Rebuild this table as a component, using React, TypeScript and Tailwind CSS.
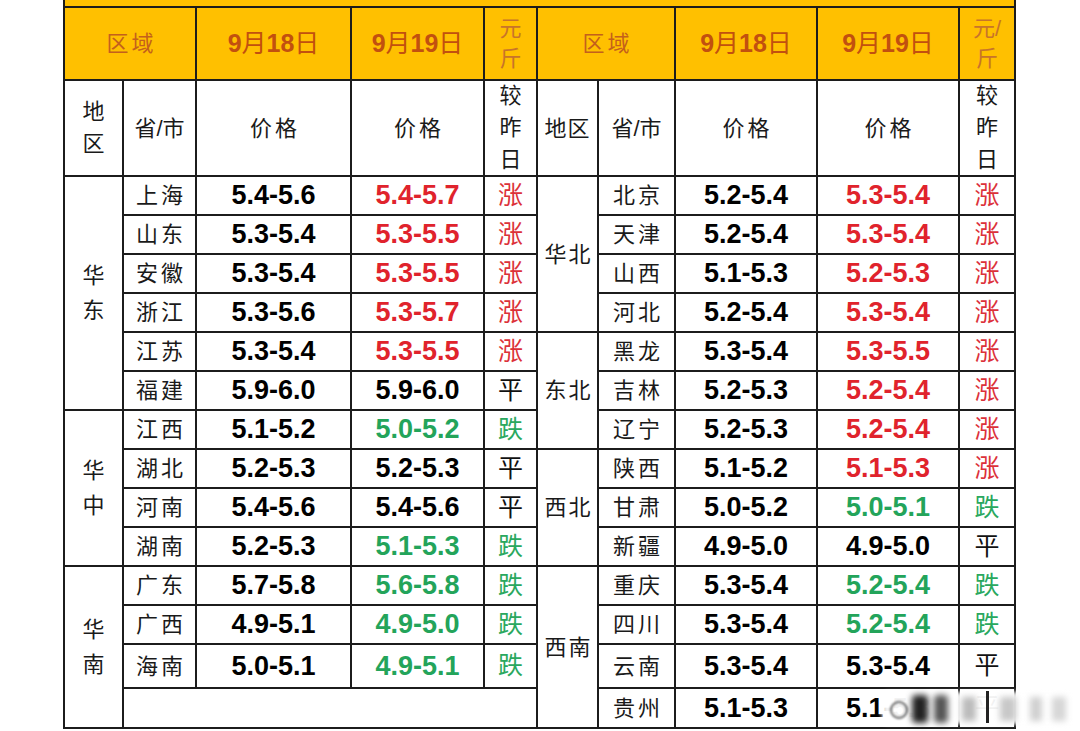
import React from 'react';

type Chg = '涨' | '跌' | '平';
type Row = { name: string; a: string; b: string; c: Chg };

const left: { region: string; rows: Row[] }[] = [
  {
    region: '华东',
    rows: [
      { name: '上海', a: '5.4-5.6', b: '5.4-5.7', c: '涨' },
      { name: '山东', a: '5.3-5.4', b: '5.3-5.5', c: '涨' },
      { name: '安徽', a: '5.3-5.4', b: '5.3-5.5', c: '涨' },
      { name: '浙江', a: '5.3-5.6', b: '5.3-5.7', c: '涨' },
      { name: '江苏', a: '5.3-5.4', b: '5.3-5.5', c: '涨' },
      { name: '福建', a: '5.9-6.0', b: '5.9-6.0', c: '平' },
    ],
  },
  {
    region: '华中',
    rows: [
      { name: '江西', a: '5.1-5.2', b: '5.0-5.2', c: '跌' },
      { name: '湖北', a: '5.2-5.3', b: '5.2-5.3', c: '平' },
      { name: '河南', a: '5.4-5.6', b: '5.4-5.6', c: '平' },
      { name: '湖南', a: '5.2-5.3', b: '5.1-5.3', c: '跌' },
    ],
  },
  {
    region: '华南',
    rows: [
      { name: '广东', a: '5.7-5.8', b: '5.6-5.8', c: '跌' },
      { name: '广西', a: '4.9-5.1', b: '4.9-5.0', c: '跌' },
      { name: '海南', a: '5.0-5.1', b: '4.9-5.1', c: '跌' },
    ],
  },
];

const right: { region: string; rows: Row[] }[] = [
  {
    region: '华北',
    rows: [
      { name: '北京', a: '5.2-5.4', b: '5.3-5.4', c: '涨' },
      { name: '天津', a: '5.2-5.4', b: '5.3-5.4', c: '涨' },
      { name: '山西', a: '5.1-5.3', b: '5.2-5.3', c: '涨' },
      { name: '河北', a: '5.2-5.4', b: '5.3-5.4', c: '涨' },
    ],
  },
  {
    region: '东北',
    rows: [
      { name: '黑龙', a: '5.3-5.4', b: '5.3-5.5', c: '涨' },
      { name: '吉林', a: '5.2-5.3', b: '5.2-5.4', c: '涨' },
      { name: '辽宁', a: '5.2-5.3', b: '5.2-5.4', c: '涨' },
    ],
  },
  {
    region: '西北',
    rows: [
      { name: '陕西', a: '5.1-5.2', b: '5.1-5.3', c: '涨' },
      { name: '甘肃', a: '5.0-5.2', b: '5.0-5.1', c: '跌' },
      { name: '新疆', a: '4.9-5.0', b: '4.9-5.0', c: '平' },
    ],
  },
  {
    region: '西南',
    rows: [
      { name: '重庆', a: '5.3-5.4', b: '5.2-5.4', c: '跌' },
      { name: '四川', a: '5.3-5.4', b: '5.2-5.4', c: '跌' },
      { name: '云南', a: '5.3-5.4', b: '5.3-5.4', c: '平' },
      { name: '贵州', a: '5.1-5.3', b: '5.1-5.3', c: '平' },
    ],
  },
];

const SPAN: Record<number, string> = {
  3: 'row-span-3',
  4: 'row-span-4',
  6: 'row-span-6',
};

const colorOf = (c: Chg) =>
  c === '涨' ? 'text-[#e0232c]' : c === '跌' ? 'text-[#23a45a]' : 'text-black';

const chgColor = (c: Chg) =>
  c === '涨' ? 'text-[#dc3139]' : c === '跌' ? 'text-[#2aa85e]' : 'text-[#111]';

function Cell({
  className = '',
  bg = 'bg-white',
  children,
}: {
  className?: string;
  bg?: string;
  children?: React.ReactNode;
}) {
  return <div className={`${bg} flex items-center justify-center ${className}`}>{children}</div>;
}

function Vert({ chars, lh, className = '' }: { chars: string[]; lh: string; className?: string }) {
  return (
    <div className={`flex flex-col items-center ${lh} ${className}`}>
      {chars.map((ch, i) => (
        <span key={i}>{ch}</span>
      ))}
    </div>
  );
}

function DateHead({ day }: { day: string }) {
  return (
    <div className="text-[25px] text-[#c2500f] leading-none">
      <span className="font-bold">9</span>
      <span>月</span>
      <span className="font-bold">{day}</span>
      <span>日</span>
    </div>
  );
}

function flatten(groups: { region: string; rows: Row[] }[]) {
  const out: { region?: string; span?: number; row?: Row }[] = [];
  groups.forEach((g) => {
    g.rows.forEach((r, i) => {
      out.push({
        region: i === 0 ? g.region : undefined,
        span: i === 0 ? (g.region === '华南' ? 4 : g.rows.length) : undefined,
        row: r,
      });
    });
  });
  return out;
}

export default function App() {
  const L = flatten(left);
  const R = flatten(right);
  const cells: React.ReactNode[] = [];

  for (let k = 0; k < 14; k++) {
    const l = L[k];
    const r = R[k];
    if (l && l.region) {
      cells.push(
        <Cell key={`lr${k}`} className={`${SPAN[l.span!]} text-[22px] text-[#1a1a1a]`}>
          <Vert chars={l.region.split('')} lh="leading-[35px]" />
        </Cell>
      );
    }
    if (l) {
      const row = l.row!;
      cells.push(
        <Cell key={`ln${k}`} className="text-[22px] tracking-[3px] pl-[3px] text-[#1a1a1a]">
          {row.name}
        </Cell>,
        <Cell key={`la${k}`} className="text-[27px] font-bold text-black">
          {row.a}
        </Cell>,
        <Cell key={`lb${k}`} className={`text-[27px] font-bold ${colorOf(row.c)}`}>
          {row.b}
        </Cell>,
        <Cell key={`lc${k}`} className={`text-[25px] ${chgColor(row.c)}`}>
          {row.c}
        </Cell>
      );
    } else {
      cells.push(<Cell key={`le${k}`} className="col-span-4" />);
    }
    if (r && r.region) {
      cells.push(
        <Cell key={`rr${k}`} className={`${SPAN[r.span!]} text-[22px] tracking-[2px] pl-[2px] text-[#1a1a1a]`}>
          {r.region}
        </Cell>
      );
    }
    if (r) {
      const row = r.row!;
      cells.push(
        <Cell key={`rn${k}`} className="text-[22px] tracking-[3px] pl-[3px] text-[#1a1a1a]">
          {row.name}
        </Cell>,
        <Cell key={`ra${k}`} className="text-[27px] font-bold text-black">
          {row.a}
        </Cell>,
        <Cell key={`rb${k}`} className={`text-[27px] font-bold ${colorOf(row.c)}`}>
          {row.b}
        </Cell>,
        <Cell key={`rc${k}`} className={`text-[25px] ${chgColor(row.c)}`}>
          {row.c}
        </Cell>
      );
    }
  }

  return (
    <div className="relative w-[1080px] h-[731px] bg-white overflow-hidden font-['Liberation_Sans','Noto_Sans_CJK_SC',sans-serif]">
      <div className="ml-[63px] w-[953px] grid grid-cols-[57px_71px_153px_131px_51px_59px_75px_140px_140px_54px] grid-rows-[6px_71px_94px_repeat(12,37px)_42px_38px] gap-[2px] bg-[#1c1c1c] px-[2px] pb-[2px]">
        {/* top strip */}
        <Cell bg="bg-[#ffc000]" className="col-span-10" />

        {/* header row 1 */}
        <Cell bg="bg-[#ffc000]" className="col-span-2 text-[22px] tracking-[3px] pl-[3px] text-[#c4601c]">
          区域
        </Cell>
        <Cell bg="bg-[#ffc000]">
          <DateHead day="18" />
        </Cell>
        <Cell bg="bg-[#ffc000]">
          <DateHead day="19" />
        </Cell>
        <Cell bg="bg-[#ffc000]" className="text-[22px] text-[#c8742a]">
          <Vert chars={['元', '斤']} lh="leading-[30px]" />
        </Cell>
        <Cell bg="bg-[#ffc000]" className="col-span-2 text-[22px] tracking-[3px] pl-[3px] text-[#c4601c]">
          区域
        </Cell>
        <Cell bg="bg-[#ffc000]">
          <DateHead day="18" />
        </Cell>
        <Cell bg="bg-[#ffc000]">
          <DateHead day="19" />
        </Cell>
        <Cell bg="bg-[#ffc000]" className="text-[22px] text-[#c8742a]">
          <Vert chars={['元/', '斤']} lh="leading-[30px]" />
        </Cell>

        {/* header row 2 */}
        <Cell className="text-[22px] text-[#1a1a1a]">
          <Vert chars={['地', '区']} lh="leading-[32px]" />
        </Cell>
        <Cell className="text-[22px] text-[#1a1a1a]">省/市</Cell>
        <Cell className="text-[22px] tracking-[3px] pl-[3px] text-[#1a1a1a]">价格</Cell>
        <Cell className="text-[22px] tracking-[3px] pl-[3px] text-[#1a1a1a]">价格</Cell>
        <Cell className="text-[22px] text-[#1a1a1a]">
          <Vert chars={['较', '昨', '日']} lh="leading-[32px]" />
        </Cell>
        <Cell className="text-[22px] tracking-[1px] text-[#1a1a1a]">地区</Cell>
        <Cell className="text-[22px] text-[#1a1a1a]">省/市</Cell>
        <Cell className="text-[22px] tracking-[3px] pl-[3px] text-[#1a1a1a]">价格</Cell>
        <Cell className="text-[22px] tracking-[3px] pl-[3px] text-[#1a1a1a]">价格</Cell>
        <Cell className="text-[22px] text-[#1a1a1a]">
          <Vert chars={['较', '昨', '日']} lh="leading-[32px]" />
        </Cell>

        {cells}
      </div>

      {/* watermark overlay */}
      <div className="absolute left-[882px] top-[689px] w-[192px] h-[38px] pointer-events-none">
        <div className="absolute left-[0px] top-[3px] w-[186px] h-[32px] bg-white/95 blur-[2px] rounded-md" />
        <div className="absolute left-[8px] top-[12px] w-[18px] h-[18px] rounded-full border-2 border-[#666] blur-[1px]" />
        <div className="absolute left-[30px] top-[6px] w-[16px] h-[28px] bg-[#222] blur-[3px] rounded-sm" />
        <div className="absolute left-[52px] top-[6px] w-[14px] h-[28px] bg-[#555] blur-[3px] rounded-sm" />
        <div className="absolute left-[80px] top-[8px] w-[14px] h-[24px] bg-[#bbb] blur-[3px]" />
        <div className="absolute left-[104px] top-[2px] w-[3px] h-[32px] bg-[#222] blur-[0.5px]" />
        <div className="absolute left-[118px] top-[8px] w-[16px] h-[24px] bg-[#c8c8c8] blur-[3px]" />
        <div className="absolute left-[148px] top-[8px] w-[12px] h-[24px] bg-[#d0d0d0] blur-[3px]" />
        <div className="absolute left-[170px] top-[8px] w-[14px] h-[24px] bg-[#d6d6d6] blur-[3px]" />
      </div>
    </div>
  );
}
